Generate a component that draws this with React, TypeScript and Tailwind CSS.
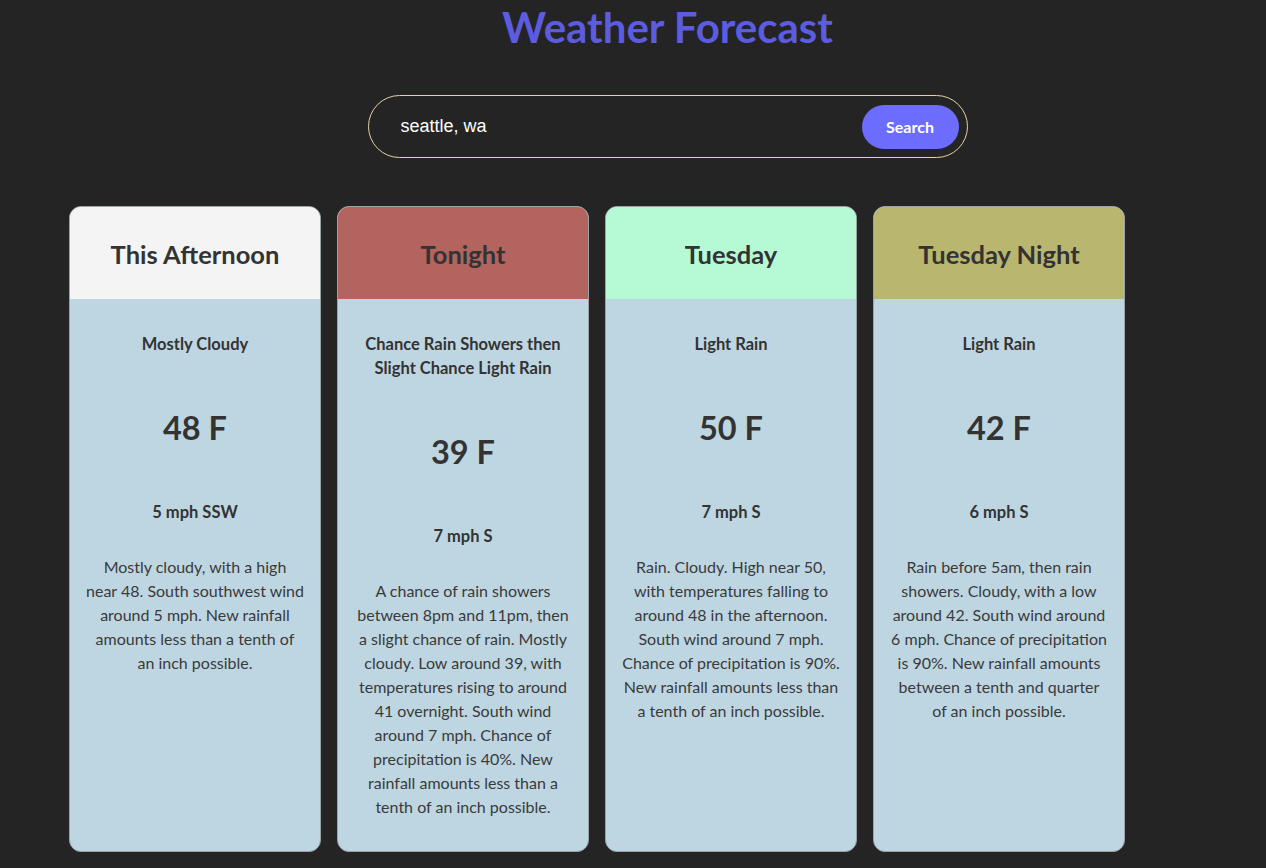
import React from "react";

type Period = {
  name: string;
  headerBg: string;
  condition: string[];
  temp: string;
  wind: string;
  desc: string[];
};

const periods: Period[] = [
  {
    name: "This Afternoon",
    headerBg: "bg-[#f4f4f4]",
    condition: ["Mostly Cloudy"],
    temp: "48 F",
    wind: "5 mph SSW",
    desc: [
      "Mostly cloudy, with a high",
      "near 48. South southwest wind",
      "around 5 mph. New rainfall",
      "amounts less than a tenth of",
      "an inch possible.",
    ],
  },
  {
    name: "Tonight",
    headerBg: "bg-[#b3645e]",
    condition: ["Chance Rain Showers then", "Slight Chance Light Rain"],
    temp: "39 F",
    wind: "7 mph S",
    desc: [
      "A chance of rain showers",
      "between 8pm and 11pm, then",
      "a slight chance of rain. Mostly",
      "cloudy. Low around 39, with",
      "temperatures rising to around",
      "41 overnight. South wind",
      "around 7 mph. Chance of",
      "precipitation is 40%. New",
      "rainfall amounts less than a",
      "tenth of an inch possible.",
    ],
  },
  {
    name: "Tuesday",
    headerBg: "bg-[#b5f9d5]",
    condition: ["Light Rain"],
    temp: "50 F",
    wind: "7 mph S",
    desc: [
      "Rain. Cloudy. High near 50,",
      "with temperatures falling to",
      "around 48 in the afternoon.",
      "South wind around 7 mph.",
      "Chance of precipitation is 90%.",
      "New rainfall amounts less than",
      "a tenth of an inch possible.",
    ],
  },
  {
    name: "Tuesday Night",
    headerBg: "bg-[#b9b66f]",
    condition: ["Light Rain"],
    temp: "42 F",
    wind: "6 mph S",
    desc: [
      "Rain before 5am, then rain",
      "showers. Cloudy, with a low",
      "around 42. South wind around",
      "6 mph. Chance of precipitation",
      "is 90%. New rainfall amounts",
      "between a tenth and quarter",
      "of an inch possible.",
    ],
  },
];

function Card({ p }: { p: Period }) {
  return (
    <div className="w-[252px] h-[646px] rounded-[12px] border border-[#9aa3a8] overflow-hidden bg-[#bed6e2] flex flex-col">
      <div className={`${p.headerBg} h-[92px] flex items-center justify-center shrink-0`}>
        <h2 className="text-[25.5px] font-bold text-[#333333] leading-[32px] pt-[2px]">{p.name}</h2>
      </div>
      <div className="flex flex-col items-center text-center pt-[33px] text-[#333333]">
        <div className="text-[16.5px] font-bold leading-[24px]">
          {p.condition.map((l) => (
            <div key={l} className="whitespace-nowrap">{l}</div>
          ))}
        </div>
        <div className="mt-[54px] text-[32.5px] font-bold leading-[36px]">{p.temp}</div>
        <div className="mt-[54px] text-[16.5px] font-bold leading-[24px]">{p.wind}</div>
        <p className="mt-[31px] text-[16px] leading-[24px] text-[#3a3a3a]">
          {p.desc.map((l) => (
            <span key={l} className="block whitespace-nowrap">{l}</span>
          ))}
        </p>
      </div>
    </div>
  );
}

export default function App() {
  return (
    <div
      className="min-h-[868px] w-full bg-[#242424] pl-[69px]"
      style={{ fontFamily: "Lato, 'Noto Sans', sans-serif" }}
    >
      <div className="w-[1197px] flex flex-col items-center">
        <h1 className="text-[42px] font-bold text-[#5c5ce0] leading-[54px] mt-0">Weather Forecast</h1>
        <div className="mt-[41px] w-[600px] h-[63px] rounded-full border border-[#e3d3a6] flex items-center pl-[32px] pr-[8px]">
          <span
            className="flex-1 text-[18px] text-white"
            style={{ fontFamily: "'Liberation Sans', Arial, sans-serif" }}
          >
            seattle, wa
          </span>
          <button className="w-[97px] h-[44px] rounded-full bg-[#6c6cff] text-white text-[16px] font-bold">
            Search
          </button>
        </div>
      </div>
      <div className="mt-[48px] flex gap-[16px] items-start">
        {periods.map((p) => (
          <Card key={p.name} p={p} />
        ))}
      </div>
    </div>
  );
}
